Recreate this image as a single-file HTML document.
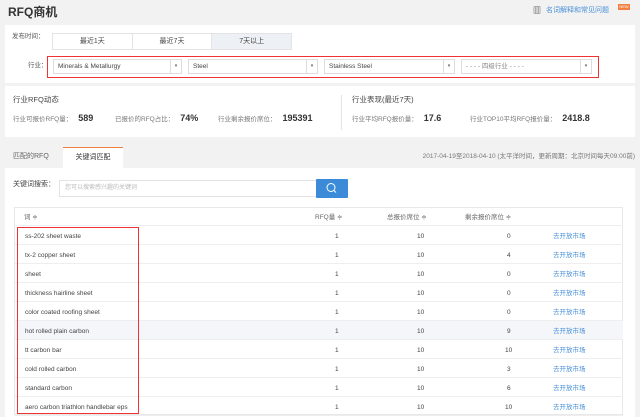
<!DOCTYPE html>
<html><head><meta charset="utf-8"><style>
*{margin:0;padding:0;box-sizing:border-box}
body{width:640px;height:417px;background:#f2f2f2;font-family:"Liberation Sans","Noto Sans CJK SC",sans-serif;font-size:7px;color:#555;position:relative;overflow:hidden}
.a{position:absolute;white-space:nowrap}
.panel{position:absolute;background:#fff}
.sel{position:absolute;height:15px;border:1px solid #ddd;background:#fff;font-size:6.5px;color:#444;padding:0 4px;line-height:13px}
.sel .ar{position:absolute;right:0;top:0;width:11px;height:13px;border-left:1px solid #ddd;font-size:5px;text-align:center;line-height:13px;color:#666}
.row{position:absolute;left:15px;width:608px;height:19px;border-bottom:1px solid #eee;font-size:6.5px;color:#444;line-height:18px}
.row span{position:absolute;top:2px}
.lk{color:#4a90d9}
.st{position:absolute;white-space:nowrap;display:flex;align-items:baseline;top:113px}
.st b{font-size:9px;color:#333;margin-left:6px}
.st i{font-style:normal;font-size:6.5px;color:#777}
</style></head><body>
<div class="a" style="left:8px;top:4px;font-size:12px;font-weight:bold;color:#333;line-height:16px">RFQ商机</div>
<div class="a" style="left:533px;top:6px;font-size:8px;color:#333;font-weight:bold;line-height:10px">▥</div>
<div class="a lk" style="left:546px;top:6px;font-size:7px;line-height:10px">名词解释和常见问题</div>
<div class="a" style="left:618px;top:4px;width:12px;height:6px;background:#f08040;font-size:4px;color:#fff;text-align:center;line-height:6px">NEW</div>

<div class="panel" style="left:5px;top:25px;width:630px;height:58px"></div>
<div class="a" style="left:12px;top:32px;font-size:6.5px;line-height:10px">发布时间：</div>
<div class="a" style="left:52px;top:33px;width:240px;height:17px;border:1px solid #e3e3e3;display:flex;font-size:7px;color:#444">
<div style="flex:1;text-align:center;line-height:15px;border-right:1px solid #e3e3e3">最近1天</div>
<div style="flex:1;text-align:center;line-height:15px;border-right:1px solid #e3e3e3">最近7天</div>
<div style="flex:1;text-align:center;line-height:15px;background:#edf0f4">7天以上</div></div>
<div class="a" style="left:28px;top:61px;font-size:6.5px;line-height:10px">行业：</div>
<div class="a" style="left:47px;top:56px;width:552px;height:22px;border:1.5px solid #e33"></div>
<div class="sel" style="left:53px;top:59px;width:129px">Minerals &amp; Metallurgy<div class="ar">▾</div></div>
<div class="sel" style="left:188px;top:59px;width:130px">Steel<div class="ar">▾</div></div>
<div class="sel" style="left:324px;top:59px;width:131px">Stainless Steel<div class="ar">▾</div></div>
<div class="sel" style="left:461px;top:59px;width:131px;color:#888">- - - - 四级行业 - - - -<div class="ar">▾</div></div>

<div class="panel" style="left:5px;top:86px;width:630px;height:51px"></div>
<div class="a" style="left:13px;top:94px;font-size:7.5px;color:#444;line-height:11px">行业RFQ动态</div>
<div class="st" style="left:13px"><i>行业可报价RFQ量：</i><b>589</b></div>
<div class="st" style="left:115px"><i>已报价的RFQ占比：</i><b>74%</b></div>
<div class="st" style="left:218px"><i>行业剩余报价席位：</i><b>195391</b></div>
<div class="a" style="left:341px;top:95px;width:1px;height:35px;background:#e5e5e5"></div>
<div class="a" style="left:352px;top:94px;font-size:7.5px;color:#444;line-height:11px">行业表现(最近7天)</div>
<div class="st" style="left:352px"><i>行业平均RFQ报价量：</i><b>17.6</b></div>
<div class="st" style="left:470px"><i>行业TOP10平均RFQ报价量：</i><b>2418.8</b></div>

<div class="a" style="left:13px;top:152px;font-size:7px;color:#666;line-height:10px">匹配的RFQ</div>
<div class="a" style="left:63px;top:147px;width:60px;height:22px;background:#fff;border-top:1px solid #f08040;text-align:center;line-height:20px;font-size:7px;color:#333">关键词匹配</div>
<div class="a" style="right:5px;top:152px;font-size:6.5px;color:#777;line-height:10px">2017-04-19至2018-04-10 (太平洋时间，更新周期：北京时间每天09:00前)</div>

<div class="panel" style="left:5px;top:168px;width:630px;height:249px"></div>
<div class="a" style="left:13px;top:180px;font-size:7px;color:#444;line-height:10px">关键词搜索：</div>
<div class="a" style="left:59px;top:180px;width:258px;height:17px;border:1px solid #e3e3e3;font-size:6px;color:#bbb;padding:0 5px;line-height:15px">您可以搜索感兴趣的关键词</div>
<div class="a" style="left:316px;top:179px;width:32px;height:19px;background:#3b8bd9;border-radius:1px">
<svg width="32" height="19"><circle cx="15" cy="8.5" r="4" fill="none" stroke="#fff" stroke-width="1"/><line x1="18" y1="11.5" x2="20" y2="13.5" stroke="#fff" stroke-width="1"/></svg></div>

<div class="a" style="left:14px;top:207px;width:609px;height:208px;border:1px solid #e8e8e8"></div>
<div class="row" style="top:207px;height:19px;color:#666"><span style="left:9px">词 ≑</span><span style="left:300px">RFQ量 ≑</span><span style="left:372px">总报价席位 ≑</span><span style="left:450px">剩余报价席位 ≑</span></div>
<div class="row" style="top:226px"><span style="left:10px">ss-202 sheet waste</span><span style="left:320px">1</span><span style="left:402px">10</span><span style="left:492px">0</span><span class="lk" style="left:538px">去开放市场</span></div>
<div class="row" style="top:245px"><span style="left:10px">tx-2 copper sheet</span><span style="left:320px">1</span><span style="left:402px">10</span><span style="left:492px">4</span><span class="lk" style="left:538px">去开放市场</span></div>
<div class="row" style="top:264px"><span style="left:10px">sheet</span><span style="left:320px">1</span><span style="left:402px">10</span><span style="left:492px">0</span><span class="lk" style="left:538px">去开放市场</span></div>
<div class="row" style="top:283px"><span style="left:10px">thickness hairline sheet</span><span style="left:320px">1</span><span style="left:402px">10</span><span style="left:492px">0</span><span class="lk" style="left:538px">去开放市场</span></div>
<div class="row" style="top:302px"><span style="left:10px">color coated roofing sheet</span><span style="left:320px">1</span><span style="left:402px">10</span><span style="left:492px">0</span><span class="lk" style="left:538px">去开放市场</span></div>
<div class="row" style="top:321px;background:#f4f6f9"><span style="left:10px">hot rolled plain carbon</span><span style="left:320px">1</span><span style="left:402px">10</span><span style="left:492px">9</span><span class="lk" style="left:538px">去开放市场</span></div>
<div class="row" style="top:340px"><span style="left:10px">tt carbon bar</span><span style="left:320px">1</span><span style="left:402px">10</span><span style="left:490px">10</span><span class="lk" style="left:538px">去开放市场</span></div>
<div class="row" style="top:359px"><span style="left:10px">cold rolled carbon</span><span style="left:320px">1</span><span style="left:402px">10</span><span style="left:492px">3</span><span class="lk" style="left:538px">去开放市场</span></div>
<div class="row" style="top:378px"><span style="left:10px">standard carbon</span><span style="left:320px">1</span><span style="left:402px">10</span><span style="left:492px">6</span><span class="lk" style="left:538px">去开放市场</span></div>
<div class="row" style="top:397px"><span style="left:10px">aero carbon triathlon handlebar eps</span><span style="left:320px">1</span><span style="left:402px">10</span><span style="left:490px">10</span><span class="lk" style="left:538px">去开放市场</span></div>
<div class="a" style="left:17px;top:227px;width:122px;height:187px;border:1.5px solid #e33"></div>
</body></html>
